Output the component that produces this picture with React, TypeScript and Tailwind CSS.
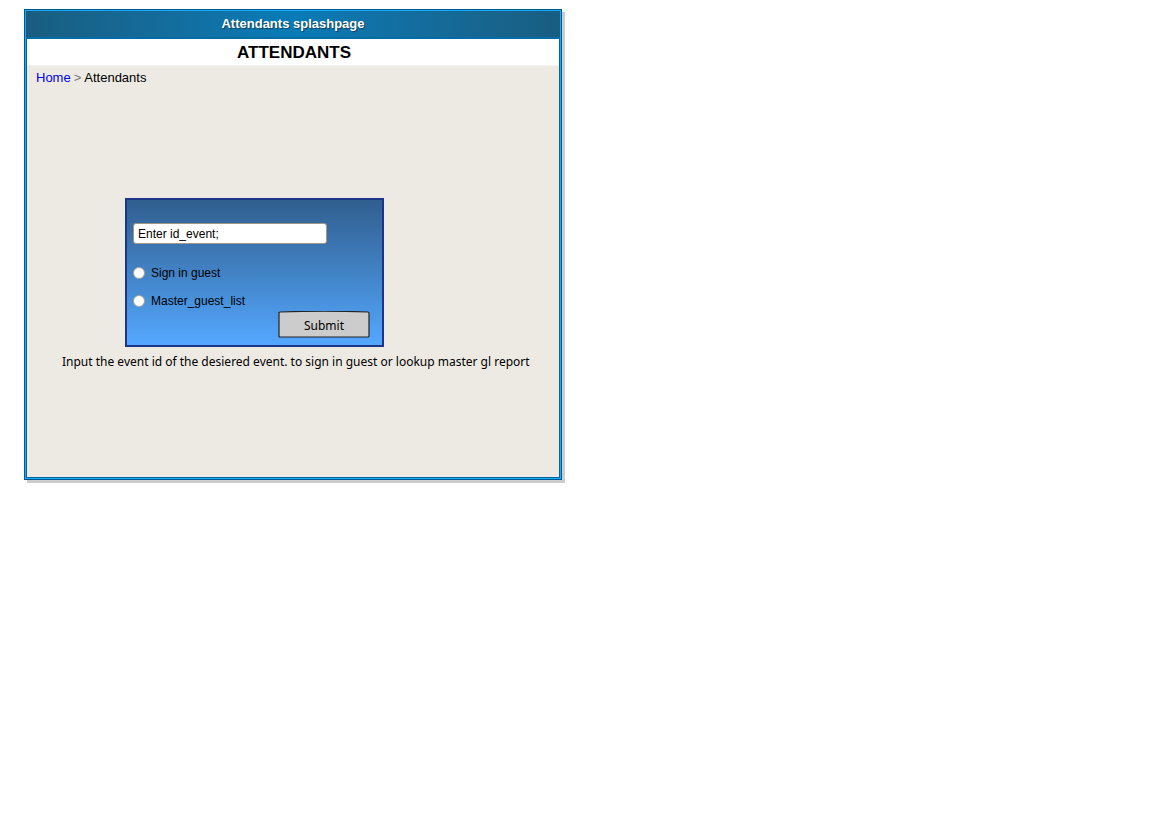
import { useState } from 'react';

function Breadcrumb() {
  return (
    <nav aria-label="Breadcrumb" className="flex gap-[3px] px-[9px] text-[13px] leading-6">
      <a href="#home" className="text-[#0000ee]">Home</a>
      <span className="text-[#777777]">&gt;</span>
      <span>Attendants</span>
    </nav>
  );
}

function RadioOption({ label, value }: { label: string; value: string }) {
  return (
    <label className="flex h-7 items-center gap-[6px] text-[12px]">
      <input
        type="radio"
        name="action"
        value={value}
        className="h-3 w-3 appearance-none rounded-full border border-[#a8a39b] bg-white checked:border-4 checked:border-[#1c3586]"
      />
      {label}
    </label>
  );
}

function EventForm() {
  const [eventId, setEventId] = useState('Enter id_event;');
  return (
    <form
      onSubmit={(e) => e.preventDefault()}
      className="flex w-[259px] flex-col border-2 border-[#1c3586] bg-linear-to-b from-[#305f8f] to-[#54a8ff] px-[6px] pt-[23px] pb-[7px]"
    >
      <input
        type="text"
        aria-label="Event id"
        value={eventId}
        onChange={(e) => setEventId(e.target.value)}
        className="h-[21px] w-[194px] rounded-[3px] border border-[#a09684] bg-white px-1 text-[12px]"
      />
      <div className="mt-[15px]">
        <RadioOption label="Sign in guest" value="sign-in" />
        <RadioOption label="Master_guest_list" value="master-list" />
      </div>
      <button
        type="submit"
        className="relative -mt-1 mr-[6px] flex h-[27px] w-[92px] items-center justify-center self-end font-['Comic_Sans_MS','Noto_Sans',sans-serif] text-[12px]"
      >
        <svg className="absolute inset-0 h-full w-full" viewBox="0 0 92 27" aria-hidden="true">
          <path
            d="M1 2Q1 1 2 1Q46 -0.5 90 1Q91 1 91 2L91 25Q91 26 90 26L2 26Q1 26 1 25Z"
            fill="#cccccc"
            stroke="#222222"
            strokeWidth="1.2"
          />
        </svg>
        <span className="relative pt-[2px]">Submit</span>
      </button>
    </form>
  );
}

export default function App() {
  return (
    <main className="px-6 py-[9px] font-['Liberation_Sans',Arial,sans-serif] text-black">
      <section className="w-full max-w-[538px] border border-[#00598d] bg-[#15aaff] p-px shadow-[3px_3px_0_#cccccc]">
        <header className="h-7 border-b-2 border-[#066ca5] bg-linear-to-r from-[#195d80] via-[#087bb7] to-[#195d80] text-center text-[13px] leading-[26px] font-bold text-white [text-shadow:1px_1px_1px_#123c55]">
          Attendants splashpage
        </header>
        <div className="border-x border-b border-[#00669c] bg-[#edeae3]">
          <h1 className="border-b border-[#f5f3ef] bg-white pt-px pl-[2px] text-center text-[17px] leading-[25px] font-bold">
            ATTENDANTS
          </h1>
          <Breadcrumb />
          <div className="px-[35px] pt-[108px] pb-[105px]">
            <div className="pl-[63px]">
              <EventForm />
            </div>
            <p className="mt-[5px] font-['Comic_Sans_MS','Noto_Sans',sans-serif] text-[12px] leading-5 whitespace-nowrap">
              Input the event id of the desiered event. to sign in guest or lookup master gl report
            </p>
          </div>
        </div>
      </section>
    </main>
  );
}
